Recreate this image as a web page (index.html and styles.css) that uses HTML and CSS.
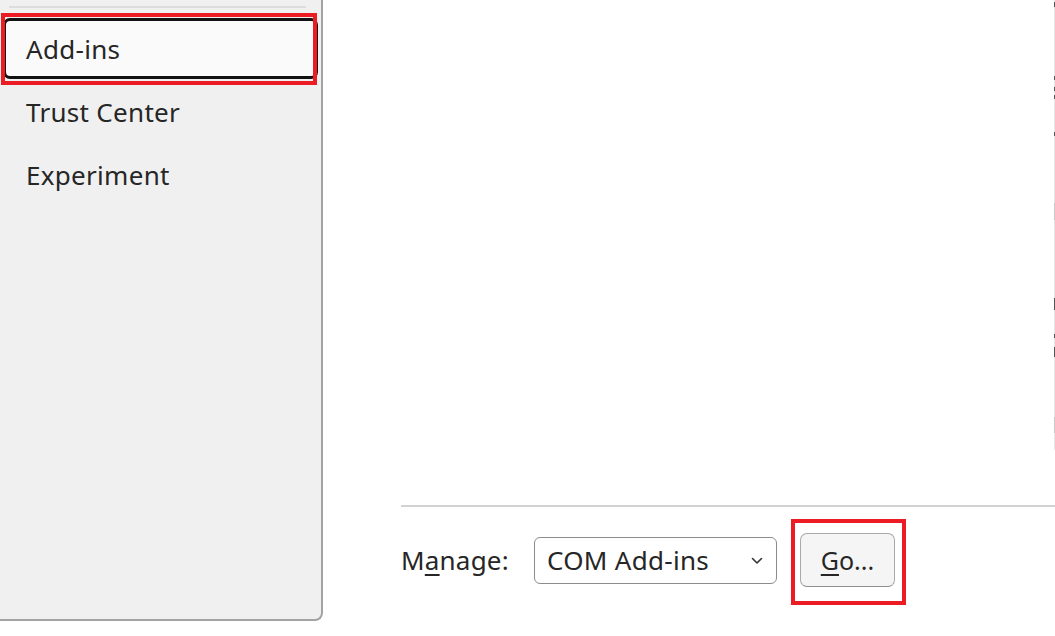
FILE: index.html
```html
<!DOCTYPE html>
<html>
<head>
<meta charset="utf-8">
<link rel="stylesheet" href="styles.css">
</head>
<body>
<div class="dialog">
  <aside class="sidebar">
    <div class="sep"></div>
    <nav class="nav">
      <div class="item focused">Add-ins</div>
      <div class="item">Trust Center</div>
      <div class="item">Experiment</div>
    </nav>
    <div class="mark mark-nav"></div>
  </aside>
  <main class="main">
    <div class="upper">
      <div class="content"></div>
      <div class="strip">
        <span class="tick t1"></span>
        <span class="tick t2"></span>
        <span class="tick t3"></span>
        <span class="tick t4"></span>
        <span class="tick t5"></span>
        <span class="tick t6 light"></span>
        <span class="tick t7"></span>
        <span class="tick t8"></span>
        <span class="tick t9"></span>
        <span class="tick t10 light"></span>
      </div>
    </div>
    <div class="rule"></div>
    <div class="footer">
      <span class="label">M<u>a</u>nage:</span>
      <div class="select">
        <span class="value">COM Add-ins</span>
        <svg class="chev" width="12" height="8" viewBox="0 0 12 8"><path d="M1.5 1.5 L6 6 L10.5 1.5" fill="none" stroke="#333" stroke-width="1.6" stroke-linecap="round" stroke-linejoin="round"/></svg>
      </div>
      <div class="go-wrap">
        <button class="go"><u>G</u>o...</button>
        <div class="mark mark-go"></div>
      </div>
    </div>
  </main>
</div>
</body>
</html>
```

FILE: styles.css
```css
html, body {
  margin: 0;
  padding: 0;
  background: #ffffff;
}
body {
  width: 1055px;
  height: 636px;
  overflow: hidden;
  font-family: "Noto Sans", "Open Sans", sans-serif;
  color: #262626;
}
.dialog {
  display: flex;
  align-items: flex-start;
  height: 636px;
}
.sidebar {
  position: relative;
  width: 321px;
  height: 613px;
  box-sizing: content-box;
  flex: none;
  background: #f0f0f0;
  border-right: 2px solid #a3a3a3;
  border-bottom: 2px solid #a3a3a3;
  border-bottom-right-radius: 8px;
  padding-top: 6px;
}
.sep {
  height: 2px;
  margin: 0 15px 0 9px;
  background: #dcdcdc;
}
.nav {
  margin-top: 9px;
  display: flex;
  flex-direction: column;
}
.item {
  height: 55px;
  width: 289px;
  margin: 1px 0 1px 3px;
  border: 3px solid transparent;
  border-radius: 7px;
  padding-left: 20px;
  display: flex;
  align-items: center;
  font-size: 26px;
  letter-spacing: 0.3px;
  box-sizing: content-box;
}
.item.focused {
  border-color: #111111;
  background: #fafafa;
}
.mark {
  position: absolute;
  border: 4px solid #ec1c24;
  box-sizing: border-box;
  pointer-events: none;
}
.mark-nav {
  left: 1px;
  top: 13px;
  width: 316px;
  height: 72px;
}
.main {
  flex: 1;
  display: flex;
  flex-direction: column;
}
.upper {
  height: 505px;
  display: flex;
}
.content {
  flex: 1;
}
.strip {
  width: 1px;
  height: 450px;
  background: #e6e6e6;
  position: relative;
}
.tick {
  position: absolute;
  left: 0;
  width: 1px;
  background: #555555;
}
.tick.light { background: #c8c8c8; }
.t1 { top: 2px; height: 5px; }
.t2 { top: 76px; height: 4px; }
.t3 { top: 87px; height: 4px; }
.t4 { top: 95px; height: 4px; }
.t5 { top: 132px; height: 4px; }
.t6 { top: 203px; height: 17px; }
.t7 { top: 298px; height: 12px; }
.t8 { top: 334px; height: 4px; }
.t9 { top: 347px; height: 10px; }
.t10 { top: 417px; height: 16px; }
.rule {
  height: 2px;
  margin-left: 78px;
  background: #d2d2d2;
}
.footer {
  margin-top: 26px;
  padding-left: 78px;
  display: flex;
  align-items: center;
}
.label {
  font-size: 26px;
  letter-spacing: 0.2px;
  width: 133px;
}
.label u, .go u {
  text-decoration-thickness: 1.5px;
  text-underline-offset: 4px;
}
.select {
  width: 243px;
  height: 47px;
  box-sizing: border-box;
  border: 1.5px solid #8c8c8c;
  border-radius: 6px;
  background: #ffffff;
  display: flex;
  align-items: center;
  justify-content: space-between;
  padding: 0 13px 0 12px;
  font-size: 26px;
}
.value {
  letter-spacing: 0.3px;
}
.chev {
  margin-top: 2px;
}
.go-wrap {
  position: relative;
  margin-left: 23px;
}
.go {
  width: 95px;
  height: 54px;
  box-sizing: border-box;
  border: 1.5px solid #a9a9a9;
  border-bottom-color: #8f8f8f;
  border-radius: 7px;
  background: #f5f5f5;
  font-family: "Noto Sans", "Open Sans", sans-serif;
  font-size: 25px;
  color: #262626;
  padding: 0;
  display: flex;
  align-items: center;
  justify-content: center;
}
.mark-go {
  left: -9px;
  top: -14px;
  width: 115px;
  height: 86px;
}
```
